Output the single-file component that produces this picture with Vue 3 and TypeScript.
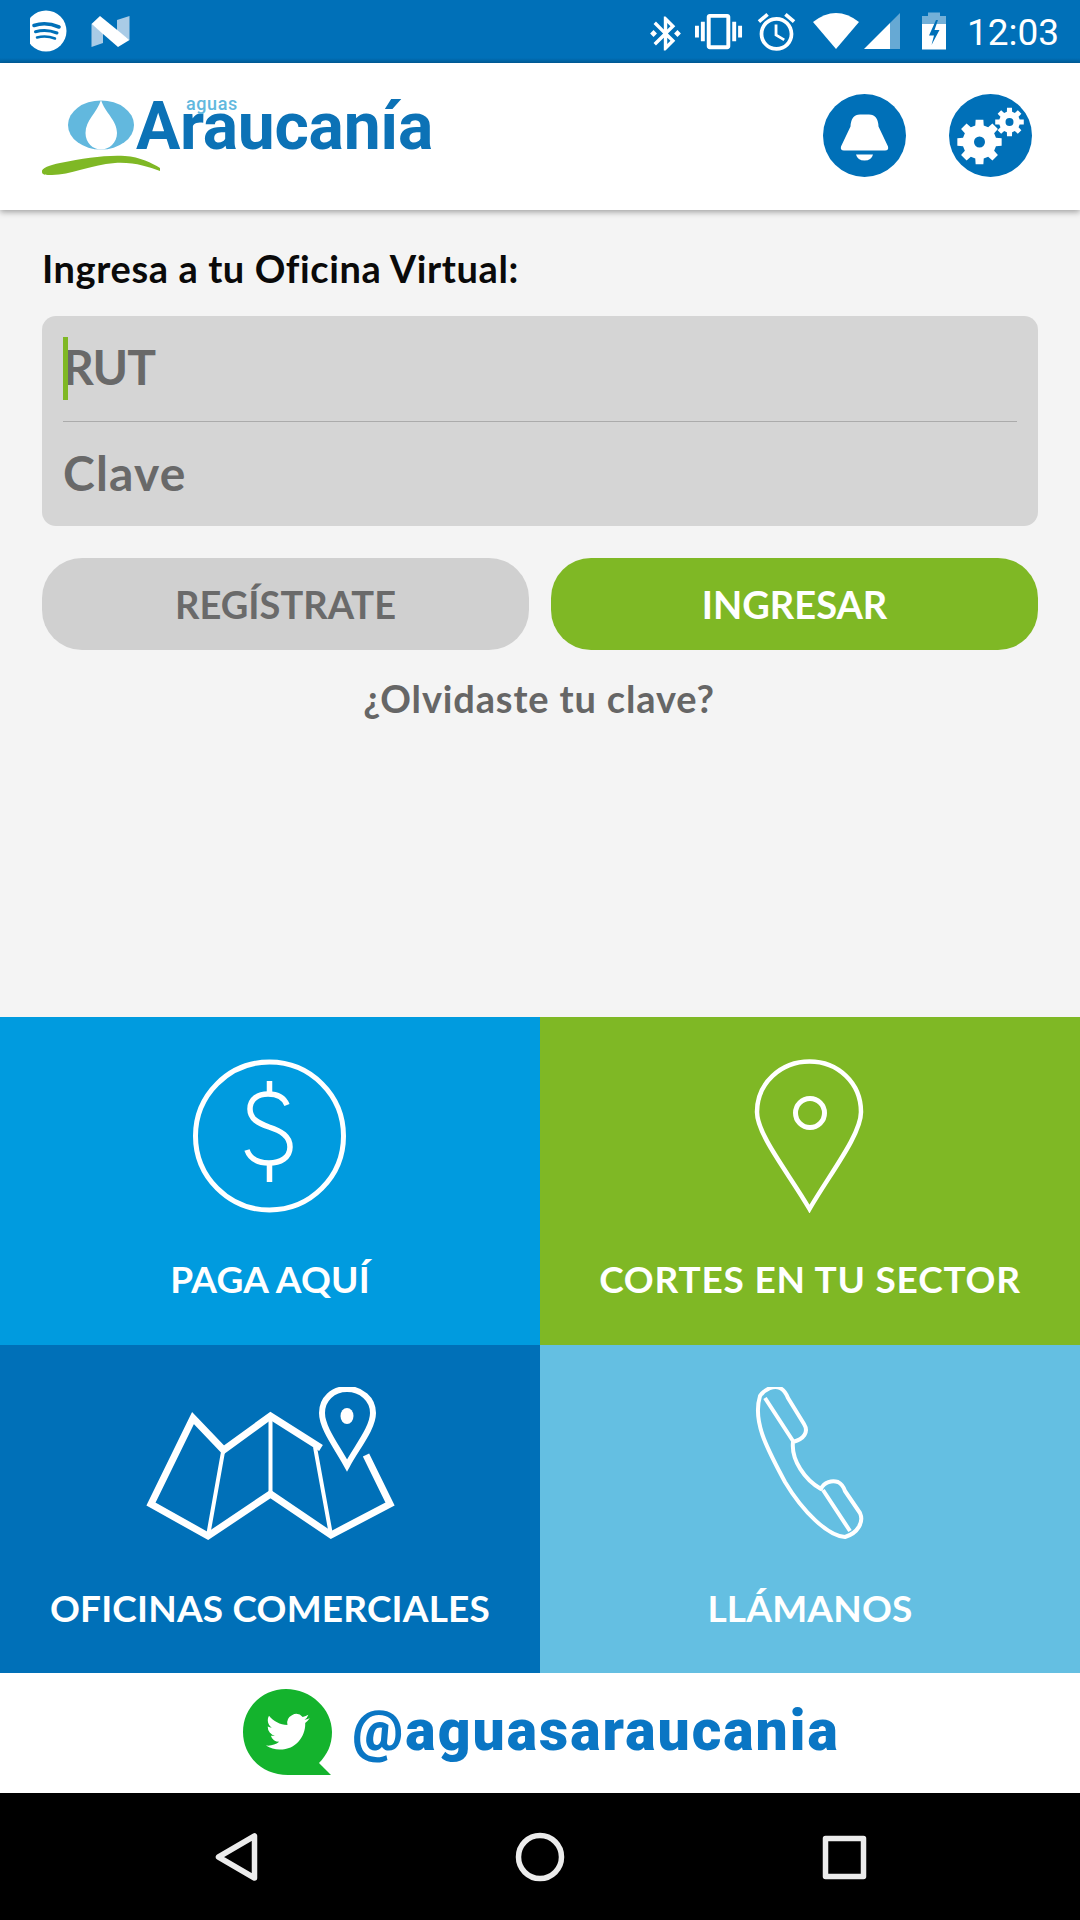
<script setup lang="ts">
function gear(cx: number, cy: number, ro: number, ri: number, hole: number, teeth: number): string {
  const pts: string[] = []
  const step = (Math.PI * 2) / teeth
  for (let i = 0; i < teeth; i++) {
    const a = i * step - Math.PI / 2
    const w = step * 0.22
    const w2 = step * 0.32
    const list: [number, number][] = [
      [a - w2, ri], [a - w, ro], [a + w, ro], [a + w2, ri],
    ]
    for (const [t, r] of list) {
      pts.push(`${(cx + Math.cos(t) * r).toFixed(2)} ${(cy + Math.sin(t) * r).toFixed(2)}`)
    }
  }
  const h = `M${cx - hole} ${cy}a${hole} ${hole} 0 1 0 ${hole * 2} 0a${hole} ${hole} 0 1 0 ${-hole * 2} 0z`
  return `M${pts.join('L')}z${h}`
}
const bigGear = gear(979, 141.5, 22.5, 17, 5.5, 8)
const smallGear = gear(1009, 121.5, 14.5, 10.5, 4, 8)
</script>

<template>
  <div class="screen">
    <div class="status">
      <svg class="status-left" viewBox="30 0 110 63" width="110" height="63">
        <circle cx="46" cy="31" r="20.5" fill="#fff" />
        <g fill="none" stroke="#0070b8" stroke-linecap="round">
          <path d="M34 25.5Q46 21.5 59 27" stroke-width="3.6" />
          <path d="M35.5 31.8Q46 28.5 57 33" stroke-width="3" />
          <path d="M37 37.5Q46 35 55 38.5" stroke-width="2.5" />
        </g>
        <path d="M91.500 24L103 33V43L91.500 47z" fill="#a9cbe6" />
        <path d="M129.500 16L117 20V31L129.500 40z" fill="#a9cbe6" />
        <path d="M91.500 24L100 16L129.500 40L118 47z" fill="#fff" />
      </svg>
      <div class="status-right">
        <svg viewBox="640 0 320 63" width="320" height="63" fill="#fff">
          <g transform="translate(645 13) scale(1.71)">
            <path d="M7 12l-2-2-2 2 2 2 2-2zm10.710-4.290L12 2h-1v7.590L6.410 5 5 6.410 10.590 12 5 17.590 6.410 19 11 14.410V22h1l5.710-5.710-4.300-4.290 4.300-4.290zM13 5.830l1.880 1.880L13 9.590V5.830zm1.880 10.460L13 18.170v-3.760l1.880 1.880zM19 10l-2 2 2 2 2-2-2-2z" />
          </g>
          <g transform="translate(695 8) scale(1.96)">
            <path d="M0 15h2V9H0v6zm3 2h2V7H3v10zm19-8v6h2V9h-2zm-3 8h2V7h-2v10zM16.500 3h-9C6.670 3 6 3.670 6 4.500v15c0 .83.67 1.500 1.500 1.500h9c.83 0 1.500-.67 1.500-1.500v-15c0-.83-.67-1.500-1.500-1.500zM16 19H8V5h8v14z" />
          </g>
          <g transform="translate(754 9.500) scale(1.875)">
            <path d="M22 5.720l-4.600-3.860-1.290 1.530 4.600 3.860L22 5.720zM7.880 3.390L6.600 1.860 2 5.710l1.290 1.530 4.590-3.850zM12.500 8H11v6l4.750 2.850.75-1.230-4-2.370V8zM12 4c-4.970 0-9 4.030-9 9s4.030 9 9 9 9-4.030 9-9-4.030-9-9-9zm0 16c-3.870 0-7-3.130-7-7s3.130-7 7-7 7 3.130 7 7-3.130 7-7 7z" />
          </g>
          <path d="M813 22Q836 4 859 22L836 49z" />
          <path d="M864 49L890 23V49z" />
          <path d="M890 23L900 13V49H890z" opacity=".4" />
          <path d="M928 12.500H940V16H946V24H922V16H928z" opacity=".45" />
          <path d="M922 24H946V49.500H922z" />
          <path d="M936 20L929 35.500H934L931.500 45L939.500 30H934.500L938 20z" fill="#0070b8" />
        </svg>
        <span class="clock">12:03</span>
      </div>
    </div>

    <header class="topbar">
      <svg class="logo" viewBox="30 80 420 100" width="420" height="100">
        <ellipse cx="101" cy="125" rx="33" ry="24.500" fill="#62b8de" />
        <path d="M101 100C97 113 85.500 120 85.500 133C85.500 143 93 149.500 101 149.500C109 149.500 117 143 117 133C117 120 105 113 101 100z" fill="#fff" />
        <path d="M42 172C41 168 50 165 60 163C85 158 105 155 125 156C140 157 152 163 160 168L160 171C148 167 135 162 115 163C90 165 70 175 52 175C46 175 42 175 42 172z" fill="#7fb825" />
        <text x="136" y="149" class="logo-main">Araucanía</text>
        <text x="186" y="110" class="logo-sub">aguas</text>
      </svg>
      <div class="actions">
        <svg class="round" viewBox="823 94.500 83 83" width="83" height="83">
          <circle cx="864.500" cy="136" r="41.500" fill="#0070b8" />
          <path d="M850.500 127Q851 115 860 115H869Q878 115 878.500 127L888 147Q889 151 885 151H844Q840 151 841 147z" fill="#fff" />
          <path d="M856 155H873Q871.500 161 864.500 161Q857.500 161 856 155z" fill="#fff" />
        </svg>
        <svg class="round" viewBox="948.500 93.500 83 83" width="83" height="83">
          <circle cx="990" cy="135" r="41.500" fill="#0070b8" />
          <path :d="bigGear" fill="#fff" fill-rule="evenodd" />
          <path :d="smallGear" fill="#fff" fill-rule="evenodd" />
        </svg>
      </div>
    </header>

    <main class="content">
      <h1 class="title">Ingresa a tu Oficina Virtual:</h1>
      <div class="form">
        <div class="field field-first"><i class="caret"></i><span class="rut">RUT</span></div>
        <div class="rule"></div>
        <div class="field"><span class="clave">Clave</span></div>
      </div>
      <div class="buttons">
        <div class="btn btn-grey">REGÍSTRATE</div>
        <div class="btn btn-green">INGRESAR</div>
      </div>
      <p class="forgot">¿Olvidaste tu clave?</p>
    </main>

    <section class="tiles">
      <div class="tile t-blue">
        <svg viewBox="190 1059 160 154" width="160" height="154" fill="none" stroke="#fff" stroke-width="5">
          <circle cx="269.500" cy="1136" r="74" />
          <path d="M287 1105C284 1097 277 1094 268 1094C258 1094 250 1099 250 1109C250 1119 258 1123 269 1127C281 1131 290 1136 290 1147C290 1158 280 1163 269 1163C258 1163 250 1159 247 1150" stroke-width="5.500" stroke-linecap="butt" />
          <path d="M269.500 1081V1094M269.500 1163V1182" stroke-width="5.500" />
        </svg>
        <span class="label">PAGA AQUÍ</span>
      </div>
      <div class="tile t-green">
        <svg viewBox="730 1059 160 154" width="160" height="154" fill="none" stroke="#fff" stroke-width="4.500">
          <path d="M809.500 1209C790 1175 757 1135 757 1112C757 1083 781 1061.500 809.500 1061.500C838 1061.500 861 1083 861 1112C861 1135 829 1175 809.500 1209z" />
          <circle cx="810" cy="1113" r="14.500" stroke-width="5" />
        </svg>
        <span class="label label-wide">CORTES EN TU SECTOR</span>
      </div>
      <div class="tile t-navy">
        <svg viewBox="140 1387 260 154" width="260" height="154" fill="none" stroke="#fff" stroke-width="7" stroke-linejoin="miter">
          <path d="M321 1448L270.500 1416L223.500 1450L193 1418L151 1504L208 1536L270.500 1494L331 1535L390 1504L366 1455" />
          <path d="M223.500 1449L208 1536M270.500 1416V1494M315 1447L331 1535" stroke-width="4" />
          <path d="M347 1465.500C337 1447 322 1428 322 1413C322 1399 333 1389 347 1389C361 1389 373 1399 373 1413C373 1428 357 1447 347 1465.500z" stroke-width="6" />
          <ellipse cx="347" cy="1416" rx="6.500" ry="8" fill="#fff" stroke="none" />
        </svg>
        <span class="label label-low">OFICINAS COMERCIALES</span>
      </div>
      <div class="tile t-sky">
        <svg viewBox="730 1387 160 154" width="160" height="154" fill="none" stroke="#fff" stroke-width="4" stroke-linejoin="round">
          <path d="M760 1396C765 1389 774 1385 780 1388C784 1390 786 1393 788 1398L804 1424C809 1432 804 1439 793 1442C791 1460 805 1480 821 1489C824 1482 832 1480 838 1482C842 1484 844 1488 845 1491L860 1513C864 1522 858 1533 845 1537C828 1536 803 1512 785 1482C768 1450 752 1422 760 1396z" />
          <path d="M765 1398L793 1441M823 1490L850 1531" />
        </svg>
        <span class="label label-low">LLÁMANOS</span>
      </div>
    </section>

    <footer class="social">
      <svg viewBox="0 0 92 90" width="92" height="90">
        <path d="M44 1C69 1 90 21 90 44C90 57 85 67 77 75L89 87H46C20 87 1 68 1 44C1 20 20 1 44 1z" fill="#14b32d" />
        <g transform="translate(24 22) scale(1.82)">
          <path fill="#fff" d="M23.953 4.570a10 10 0 01-2.825.775 4.958 4.958 0 002.163-2.723c-.951.555-2.005.959-3.127 1.184a4.920 4.920 0 00-8.384 4.482C7.690 8.095 4.067 6.130 1.640 3.162a4.822 4.822 0 00-.666 2.475c0 1.710.870 3.213 2.188 4.096a4.904 4.904 0 01-2.228-.616v.060a4.923 4.923 0 003.946 4.827 4.996 4.996 0 01-2.212.085 4.936 4.936 0 004.604 3.417 9.867 9.867 0 01-6.102 2.105c-.390 0-.779-.023-1.170-.067a13.995 13.995 0 007.557 2.209c9.053 0 13.998-7.496 13.998-13.985 0-.210 0-.420-.015-.630A9.935 9.935 0 0024 4.590z" />
        </g>
      </svg>
      <span class="handle">@aguasaraucania</span>
    </footer>

    <nav class="navbar">
      <svg viewBox="0 0 1080 127" width="1080" height="127" fill="none" stroke="#ececec" stroke-width="5.500" stroke-linejoin="round">
        <path d="M254.500 43V85L218.500 64z" />
        <circle cx="540" cy="64" r="21.500" />
        <rect x="825.500" y="45.500" width="38" height="38" />
      </svg>
    </nav>
  </div>
</template>

<style scoped>
.screen {
  width: 1080px;
  height: 1920px;
  display: flex;
  flex-direction: column;
  background: #f4f4f4;
  font-family: Lato, "Liberation Sans", sans-serif;
  overflow: hidden;
}
.status {
  height: 63px;
  flex: none;
  display: flex;
  justify-content: space-between;
  background: linear-gradient(#0070b8 0, #0070b8 58px, #00609e 63px);
}
.status-left {
  margin-left: 30px;
}
.status-right {
  display: flex;
  align-items: center;
}
.clock {
  width: 93px;
  margin: 2px 20px 0 7px;
  color: #fff;
  font: 400 37px/61px Roboto, sans-serif;
}
.topbar {
  height: 147px;
  flex: none;
  display: flex;
  justify-content: space-between;
  align-items: flex-start;
  background: #fff;
  box-shadow: 0 2px 6px rgba(0, 0, 0, 0.35);
  position: relative;
}
.logo {
  margin: 17px 0 0 30px;
}
.logo-main {
  font: 700 66px Roboto, sans-serif;
  fill: #0c72b6;
  letter-spacing: -0.3px;
}
.logo-sub {
  font: 500 18px Roboto, sans-serif;
  fill: #62b8de;
  letter-spacing: 0.6px;
}
.actions {
  display: flex;
  gap: 43px;
  margin: 31px 48px 0 0;
}
.round {
  display: block;
}
.content {
  height: 807px;
  flex: none;
  padding: 0 42px;
  box-sizing: border-box;
}
.title {
  margin: 36px 0 0;
  font-size: 38px;
  line-height: 44px;
  font-weight: 700;
  letter-spacing: 0.6px;
  color: #0a0a0a;
}
.form {
  margin-top: 26px;
  height: 210px;
  padding: 0 21px;
  box-sizing: border-box;
  background: #d5d5d5;
  border-radius: 14px;
}
.field {
  height: 105px;
  padding-bottom: 4px;
  box-sizing: border-box;
  display: flex;
  align-items: center;
  font-size: 48px;
  font-weight: 700;
  color: #696969;
}
.field-first {
  position: relative;
}
.caret {
  position: absolute;
  left: 0;
  top: 21px;
  width: 4.5px;
  height: 63px;
  background: #7fb825;
}
.rule {
  height: 1px;
  background: #ababab;
}
.rut {
  letter-spacing: -1px;
}
.clave {
  letter-spacing: 1.2px;
}
.buttons {
  margin-top: 32px;
  display: grid;
  grid-template-columns: 1fr 1fr;
  gap: 22px;
}
.btn {
  height: 92px;
  border-radius: 40px;
  display: flex;
  align-items: center;
  justify-content: center;
  font-size: 38px;
  font-weight: 700;
}
.btn-grey {
  background: #d0d0d0;
  color: #6a6a6a;
}
.btn-green {
  background: #7fb825;
  color: #fff;
}
.forgot {
  margin: 26px 0 0;
  padding-right: 2px;
  text-align: center;
  font-size: 38px;
  line-height: 44px;
  font-weight: 700;
  letter-spacing: 0.85px;
  color: #666;
}
.tiles {
  height: 656px;
  flex: none;
  display: grid;
  grid-template-columns: 1fr 1fr;
  grid-template-rows: 1fr 1fr;
}
.tile {
  display: flex;
  flex-direction: column;
  align-items: center;
  padding-top: 42px;
  box-sizing: border-box;
}
.label {
  margin-top: 46px;
  color: #fff;
  font-size: 37px;
  line-height: 40px;
  font-weight: 700;
  letter-spacing: 0.2px;
  white-space: nowrap;
}
.label-low {
  margin-top: 47px;
}
.label-wide {
  letter-spacing: 0.8px;
}
.t-blue {
  background: #009bdf;
}
.t-green {
  background: #7fb825;
}
.t-navy {
  background: #0070b8;
}
.t-sky {
  background: #64bfe2;
}
.social {
  height: 120px;
  flex: none;
  background: #fff;
  display: flex;
  align-items: center;
  justify-content: center;
  gap: 18px;
  padding-left: 2px;
  box-sizing: border-box;
}
.handle {
  margin-top: -6px;
  font: 900 57px/1 Roboto, sans-serif;
  letter-spacing: 2px;
  color: #0a76c4;
}
.navbar {
  height: 127px;
  flex: none;
  background: #000;
}
.navbar svg {
  display: block;
}
</style>
